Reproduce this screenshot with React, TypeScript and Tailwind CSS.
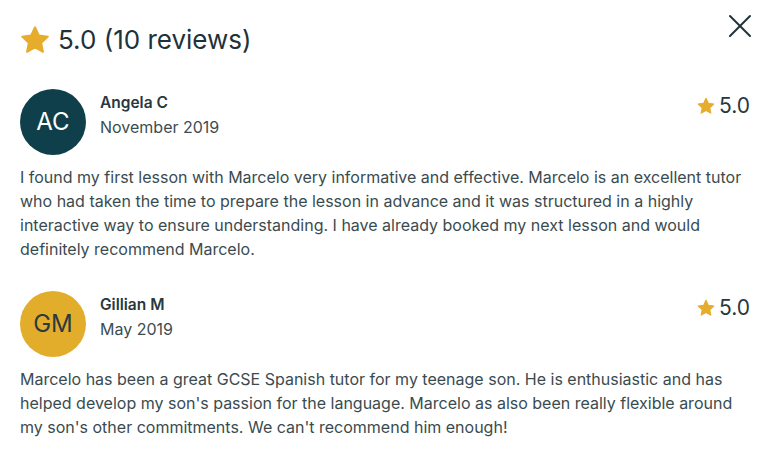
import { X } from 'lucide-react';

interface Review {
  initials: string;
  name: string;
  date: string;
  rating: string;
  text: string;
  avatar: string;
}

const reviews: Review[] = [
  {
    initials: 'AC',
    name: 'Angela C',
    date: 'November 2019',
    rating: '5.0',
    avatar: 'bg-[#0e3f4b] text-white',
    text: 'I found my first lesson with Marcelo very informative and effective. Marcelo is an excellent tutor who had taken the time to prepare the lesson in advance and it was structured in a highly interactive way to ensure understanding. I have already booked my next lesson and would definitely recommend Marcelo.',
  },
  {
    initials: 'GM',
    name: 'Gillian M',
    date: 'May 2019',
    rating: '5.0',
    avatar: 'bg-[#e3ad2c] text-[#2a3a3f]',
    text: "Marcelo has been a great GCSE Spanish tutor for my teenage son. He is enthusiastic and has helped develop my son's passion for the language. Marcelo as also been really flexible around my son's other commitments. We can't recommend him enough!",
  },
];

function Star({ className }: { className: string }) {
  return (
    <svg viewBox="0 0 24 24" className={className} fill="#e6ac2c">
      <path d="M12 1.8l3.1 6.6 7.2.9-5.3 5 1.4 7.2L12 18l-6.4 3.5 1.4-7.2-5.3-5 7.2-.9z" strokeLinejoin="round" stroke="#e6ac2c" strokeWidth="1.5" />
    </svg>
  );
}

function ReviewItem({ review }: { review: Review }) {
  return (
    <div>
      <div className="flex items-start">
        <div className={`flex h-[66px] w-[66px] shrink-0 items-center justify-center rounded-full text-[24px] ${review.avatar}`}>
          {review.initials}
        </div>
        <div className="ml-[14px] mt-[4px] flex-1">
          <div className="text-[15.5px] font-semibold leading-5 text-[#27383e]">{review.name}</div>
          <div className="mt-[4px] text-[16px] leading-5 text-[#3c4d52]">{review.date}</div>
        </div>
        <div className="-mr-[2px] mt-[5px] flex items-center gap-[4px]">
          <Star className="h-[18px] w-[18px]" />
          <span className="text-[21px] leading-6 text-[#27383e]">{review.rating}</span>
        </div>
      </div>
      <p className="-mr-[8px] mt-[10px] text-[16px] leading-6 text-[#3a4b50]">{review.text}</p>
    </div>
  );
}

export default function App() {
  return (
    <div className="h-[459px] w-[768px] overflow-hidden bg-white px-5 pt-[24px] font-['Inter',sans-serif]">
      <div className="flex items-start justify-between">
        <div className="flex items-center gap-[8px]">
          <Star className="h-[30px] w-[30px]" />
          <span className="text-[26px] leading-8 text-[#1f3238]">5.0 (10 reviews)</span>
        </div>
        <X className="-mr-[12px] -mt-[18px] h-[40px] w-[40px] text-[#1f3238]" strokeWidth={1.2} />
      </div>
      <div className="mt-[33px] space-y-[30px]">
        {reviews.map(r => (
          <ReviewItem key={r.name} review={r} />
        ))}
      </div>
    </div>
  );
}
